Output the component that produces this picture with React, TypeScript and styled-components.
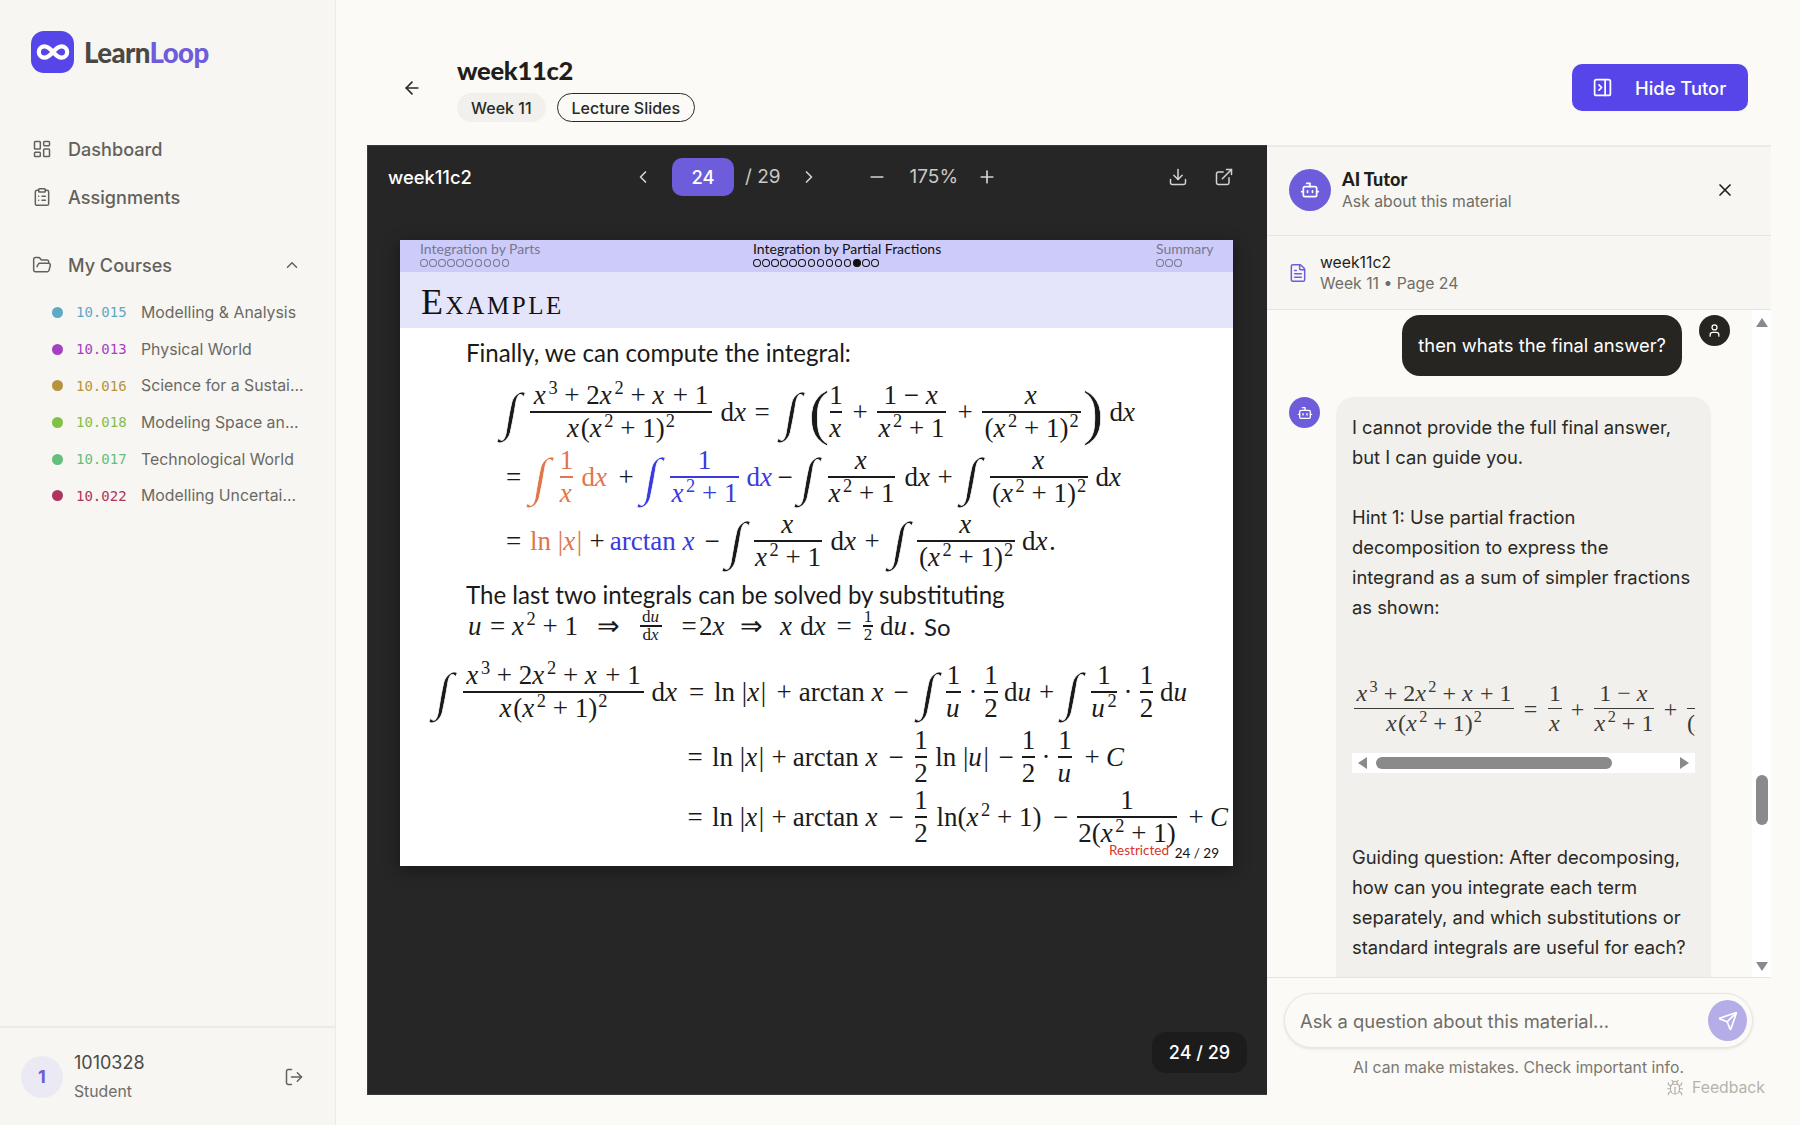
import React from "react";
import styled, { createGlobalStyle } from "styled-components";
import {
  ArrowLeft,
  Bot,
  Bug,
  ChevronLeft,
  ChevronRight,
  ChevronUp,
  ClipboardList,
  Download,
  ExternalLink,
  FileText,
  FolderOpen,
  Infinity as InfinityIcon,
  LayoutDashboard,
  LogOut,
  Minus,
  PanelRightClose,
  Plus,
  Send,
  User,
  X,
} from "lucide-react";

const GlobalStyle = createGlobalStyle`
  html, body { margin: 0; padding: 0; background: #fbfaf6; }
  * { box-sizing: border-box; }
  body { font-family: Inter, "Liberation Sans", sans-serif; color: #2a2925; }
`;

const Page = styled.div`
  display: flex;
  width: 1800px;
  height: 1125px;
  overflow: hidden;
  position: relative;
  background: #fbfaf6;
`;

/* sidebar */
const Sidebar = styled.aside`
  width: 336px;
  flex: none;
  display: flex;
  flex-direction: column;
  background: #f7f6f2;
  border-right: 1px solid #eceae5;
  padding-top: 31px;
`;

const Logo = styled.div`
  display: flex;
  align-items: center;
  gap: 10px;
  margin-left: 31px;
  height: 42px;
`;

const LogoMark = styled.div`
  width: 43px;
  height: 42px;
  border-radius: 13px;
  background: #5645e8;
  color: #fff;
  display: flex;
  align-items: center;
  justify-content: center;
`;

const LogoText = styled.div`
  font-family: Lato, sans-serif;
  font-weight: 900;
  font-size: 27.6px;
  letter-spacing: -0.6px;
  color: #4a4843;
  span { color: #6d5ddb; }
`;

const Nav = styled.nav`
  margin-top: 52px;
  display: flex;
  flex-direction: column;
`;

const NavItem = styled.div<{ $mt?: number }>`
  height: 48px;
  margin-top: ${(p) => p.$mt ?? 0}px;
  padding: 0 34px 0 32px;
  display: flex;
  align-items: center;
  gap: 16px;
  font-size: 18.1px;
  font-weight: 450;
  color: #63615b;
  svg { flex: none; }
`;

const NavEnd = styled.span`
  margin-left: auto;
  display: flex;
`;

const CourseList = styled.div`
  margin-top: 5px;
  display: flex;
  flex-direction: column;
`;

const Course = styled.div`
  height: 36.7px;
  display: flex;
  align-items: center;
  padding-left: 52px;
  white-space: nowrap;
`;

const Dot = styled.span<{ $c: string }>`
  width: 11px;
  height: 11px;
  border-radius: 50%;
  background: ${(p) => p.$c};
  flex: none;
`;

const Code = styled.span<{ $c: string }>`
  font-family: "DejaVu Sans Mono", monospace;
  font-size: 14px;
  color: ${(p) => p.$c};
  margin-left: 13px;
  width: 65px;
  flex: none;
`;

const CourseName = styled.span`
  font-size: 15.85px;
  color: #6b6963;
`;

const UserBox = styled.div`
  margin-top: auto;
  height: 99px;
  border-top: 2px solid #eceae5;
  display: flex;
  align-items: center;
  padding: 0 31px 0 21px;
  gap: 11px;
`;

const Avatar = styled.div`
  width: 42px;
  height: 42px;
  border-radius: 50%;
  background: #ebe9f4;
  color: #6d5ddb;
  font-weight: 700;
  font-size: 18px;
  display: flex;
  align-items: center;
  justify-content: center;
`;

const UserText = styled.div`
  display: flex;
  flex-direction: column;
  gap: 8px;
`;

const UserName = styled.div`
  font-size: 18px;
  line-height: 23px;
  color: #4c4a45;
`;

const UserRole = styled.div`
  font-size: 15.75px;
  line-height: 20px;
  color: #6f6d68;
`;

const LogoutButton = styled.div`
  margin-left: auto;
  display: flex;
  color: #63615b;
`;

/* main */
const Main = styled.main`
  flex: 1;
  min-width: 0;
  display: flex;
  flex-direction: column;
`;

const Header = styled.header`
  height: 145px;
  flex: none;
  padding: 30px 52px 0 66px;
  display: flex;
  align-items: center;
`;

const BackButton = styled.div`
  display: flex;
  color: #2a2925;
  margin-right: 35px;
`;

const TitleBlock = styled.div`
  display: flex;
  flex-direction: column;
  gap: 5px;
`;

const Title = styled.h1`
  margin: 0;
  font-family: Lato, sans-serif;
  font-size: 25.5px;
  line-height: 35px;
  font-weight: 900;
  color: #1f1e1b;
  letter-spacing: -0.3px;
`;

const Chips = styled.div`
  display: flex;
  gap: 11px;
`;

const Chip = styled.span<{ $outline?: boolean }>`
  height: 29px;
  padding: 0 14px;
  border-radius: 15px;
  display: flex;
  align-items: center;
  font-size: 16px;
  font-weight: 500;
  color: #2a2925;
  background: ${(p) => (p.$outline ? "#fbfaf6" : "#f1f0ec")};
  border: ${(p) => (p.$outline ? "1.5px solid #2a2925" : "0")};
`;

const HideButton = styled.div`
  margin-left: auto;
  width: 176px;
  height: 47px;
  border-radius: 10px;
  background: #5645e8;
  color: #fff;
  display: flex;
  align-items: center;
  padding-left: 20px;
  gap: 22px;
  font-size: 18.37px;
  font-weight: 500;
`;

const Workspace = styled.div`
  flex: 1;
  min-height: 0;
  display: flex;
  margin: 0 29px 30px 31px;
`;

/* viewer */
const Viewer = styled.section`
  width: 900px;
  flex: none;
  background: #262626;
  border: 1px solid #3a3a38;
  border-right: 0;
  position: relative;
  display: flex;
  flex-direction: column;
`;

const ViewerBar = styled.div`
  height: 61px;
  flex: none;
  display: flex;
  align-items: center;
  padding-left: 20px;
  color: #fff;
`;

const ViewerTitle = styled.div`
  width: 235px;
  font-size: 18.37px;
  font-weight: 500;
`;

const BarIcon = styled.span<{ $ml?: number }>`
  display: flex;
  margin-left: ${(p) => p.$ml ?? 0}px;
  color: #d4d3cf;
`;

const PageInput = styled.div`
  width: 62px;
  height: 38px;
  margin-left: 19px;
  border-radius: 10px;
  background: #6d5ddb;
  color: #fff;
  display: flex;
  align-items: center;
  justify-content: center;
  font-size: 18.37px;
  font-weight: 500;
`;

const BarText = styled.span<{ $ml: number }>`
  margin-left: ${(p) => p.$ml}px;
  font-size: 19px;
  color: #c9c8c4;
`;

const Slide = styled.div`
  width: 833px;
  height: 626px;
  margin: 33px 0 0 32px;
  background: #fff;
  position: relative;
  overflow: hidden;
  box-shadow: 0 4px 16px rgba(0, 0, 0, 0.4);
  display: flex;
  flex-direction: column;
  font-family: "Liberation Serif", serif;
  color: #1a1a1a;
`;

const SlideNav = styled.div`
  height: 32px;
  flex: none;
  background: #cccbf9;
  display: flex;
  padding: 1px 0 0 20px;
  font-family: Lato, sans-serif;
  font-size: 14px;
  line-height: 16px;
`;

const NavGroup = styled.div<{ $w?: number; $muted?: boolean }>`
  width: ${(p) => (p.$w ? `${p.$w}px` : "auto")};
  color: ${(p) => (p.$muted ? "#77778f" : "#111")};
`;

const NavDots = styled.div`
  display: flex;
  gap: 1.6px;
  margin-top: 2px;
`;

const NavDot = styled.span<{ $on?: boolean }>`
  width: 7.5px;
  height: 8px;
  border-radius: 50%;
  border: 1px solid currentColor;
  background: ${(p) => (p.$on ? "currentColor" : "transparent")};
`;

const SlideTitle = styled.div`
  height: 56px;
  flex: none;
  background: #e4e4fa;
  display: flex;
  align-items: center;
  padding: 4px 0 0 21px;
  font-size: 36px;
  font-variant: small-caps;
  letter-spacing: 2.6px;
  color: #111;
`;

const SansLine = styled.div<{ $mt: number }>`
  margin: ${(p) => p.$mt}px 0 0 66px;
  font-family: Lato, sans-serif;
  font-size: 24.1px;
  line-height: 26px;
  height: 26px;
  white-space: nowrap;
`;

const MathRow = styled.div<{ $mt?: number; $h?: number; $pl: number }>`
  margin-top: ${(p) => p.$mt ?? 0}px;
  height: ${(p) => p.$h ?? 64}px;
  padding-left: ${(p) => p.$pl}px;
  display: flex;
  align-items: center;
  flex: none;
  font-size: 27px;
  white-space: nowrap;
`;

const T = styled.span<{ $ml?: number; $w?: number; $c?: string }>`
  display: inline-block;
  flex: none;
  margin-left: ${(p) => p.$ml ?? 0}px;
  width: ${(p) => (p.$w ? `${p.$w}px` : "auto")};
  text-align: center;
  color: ${(p) => p.$c ?? "inherit"};
`;

const I = styled.i`
  font-style: italic;
  letter-spacing: 0.06em;
`;

const Sup = styled.sup`
  font-size: 0.68em;
  line-height: 0;
  margin-left: 1px;
`;

// tall symbols: the white stroke thins the glyph to the weight of the slide's font
const Big = styled.span<{ $ml?: number; $w: number; $c?: string; $size?: number; $skew?: number }>`
  display: flex;
  justify-content: center;
  flex: none;
  width: ${(p) => p.$w}px;
  margin-left: ${(p) => p.$ml ?? 0}px;
  color: ${(p) => p.$c ?? "inherit"};
  font-size: ${(p) => p.$size ?? 52}px;
  line-height: 1;
  font-weight: 400;
  font-family: "Liberation Serif", serif;
  -webkit-text-stroke: 0.7px #fff;
  transform: skewX(${(p) => p.$skew ?? -10}deg);
`;

const FracBox = styled.span<{ $ml?: number; $w?: number; $c?: string; $lh?: number; $fs?: number }>`
  display: inline-flex;
  flex-direction: column;
  align-items: center;
  flex: none;
  margin-left: ${(p) => p.$ml ?? 0}px;
  width: ${(p) => (p.$w ? `${p.$w}px` : "auto")};
  color: ${(p) => p.$c ?? "inherit"};
  line-height: ${(p) => p.$lh ?? 31}px;
  font-size: ${(p) => (p.$fs ? `${p.$fs}px` : "inherit")};
`;

const FracBar = styled.span`
  display: block;
  align-self: stretch;
  height: 1.5px;
  background: currentColor;
`;

const FracPart = styled.span`
  display: block;
  white-space: nowrap;
`;

const Footnote = styled.span<{ $c: string; $right: number; $bottom: number }>`
  position: absolute;
  bottom: ${(p) => p.$bottom}px;
  right: ${(p) => p.$right}px;
  font-family: Lato, sans-serif;
  font-size: 13.5px;
  color: ${(p) => p.$c};
`;

const SansInline = styled.span`
  font-family: Lato, sans-serif;
  font-size: 24px;
  margin-left: 9px;
`;

const PageBadge = styled.div`
  position: absolute;
  right: 20px;
  bottom: 21px;
  width: 95px;
  height: 41px;
  border-radius: 14px;
  background: #1c1c1c;
  color: #fff;
  display: flex;
  align-items: center;
  justify-content: center;
  font-size: 18px;
  font-weight: 500;
`;

/* tutor */
const Tutor = styled.section`
  flex: 1;
  min-width: 0;
  border-top: 2px solid #eceae5;
  display: flex;
  flex-direction: column;
`;

const TutorHead = styled.div`
  height: 89px;
  flex: none;
  background: #f7f6f2;
  border-bottom: 1px solid #e6e4df;
  display: flex;
  align-items: center;
  padding: 0 36px 2px 22px;
  gap: 11px;
`;

const RoundIcon = styled.div<{ $size: number; $bg: string }>`
  width: ${(p) => p.$size}px;
  height: ${(p) => p.$size}px;
  border-radius: 50%;
  background: ${(p) => p.$bg};
  color: #fff;
  flex: none;
  display: flex;
  align-items: center;
  justify-content: center;
`;

const HeadTitle = styled.div`
  font-family: Lato, sans-serif;
  font-size: 18px;
  font-weight: 900;
  line-height: 23px;
  color: #1f1e1b;
`;

const Muted = styled.div`
  font-size: 15.75px;
  line-height: 21px;
  color: #6f6d68;
`;

const CloseButton = styled.div`
  margin-left: auto;
  display: flex;
  color: #1f1e1b;
`;

const DocRow = styled.div`
  height: 74px;
  flex: none;
  background: #f7f6f2;
  border-bottom: 1px solid #e6e4df;
  display: flex;
  align-items: center;
  padding-left: 21px;
  gap: 12px;
  color: #6d5ddb;
`;

const DocName = styled.div`
  font-size: 15.75px;
  line-height: 21px;
  color: #1f1e1b;
`;

const ChatWrap = styled.div`
  flex: 1;
  min-height: 0;
  display: flex;
  background: #fbfaf6;
`;

const Messages = styled.div`
  flex: 1;
  min-width: 0;
  overflow: hidden;
  padding: 5px 22px 0;
  display: flex;
  flex-direction: column;
`;

const UserRow = styled.div`
  display: flex;
  justify-content: flex-end;
  gap: 17px;
  flex: none;
`;

const UserBubble = styled.div`
  height: 61px;
  padding: 0 16px 1px;
  border-radius: 18px;
  background: #262522;
  color: #fff;
  display: flex;
  align-items: center;
  font-size: 18.37px;
`;

const BotRow = styled.div`
  display: flex;
  gap: 16px;
  margin-top: 21px;
  flex: none;
`;

const BotBubble = styled.div`
  width: 375px;
  flex: none;
  border-radius: 18px;
  background: #f1f0ec;
  padding: 15px 16px 30px;
  font-size: 18.37px;
  line-height: 30px;
  color: #2a2925;
`;

const Para = styled.p<{ $mt?: number }>`
  margin: ${(p) => p.$mt ?? 0}px 0 0;
  white-space: nowrap;
`;

const MathScroll = styled.div`
  margin-top: 56px;
  width: 343px;
  overflow: hidden;
`;

const ChatMath = styled.div`
  display: flex;
  align-items: center;
  height: 61px;
  padding-left: 2px;
  font-family: "Liberation Serif", serif;
  font-size: 24px;
  color: #3b3a36;
  white-space: nowrap;
`;

const HScroll = styled.div`
  margin-top: 14px;
  height: 20px;
  background: #fff;
  display: flex;
  align-items: center;
  padding: 0 6px;
`;

const Arrow = styled.span<{ $dir: "up" | "down" | "left" | "right" }>`
  width: 0;
  height: 0;
  flex: none;
  border-style: solid;
  border-color: transparent;
  ${(p) =>
    p.$dir === "up"
      ? "border-width: 0 6px 9px; border-bottom-color: #8a8a8a;"
      : p.$dir === "down"
      ? "border-width: 9px 6px 0; border-top-color: #8a8a8a;"
      : p.$dir === "left"
      ? "border-width: 6px 9px 6px 0; border-right-color: #8a8a8a;"
      : "border-width: 6px 0 6px 9px; border-left-color: #8a8a8a;"}
`;

const HThumb = styled.span`
  width: 236px;
  height: 12px;
  margin-left: 9px;
  margin-right: auto;
  border-radius: 6px;
  background: #8a8a8a;
`;

const VScroll = styled.div`
  width: 19px;
  flex: none;
  background: #fff;
  display: flex;
  flex-direction: column;
  align-items: center;
  padding: 8px 0 6px;
`;

const VThumb = styled.span`
  width: 12px;
  height: 50px;
  margin-top: 448px;
  margin-bottom: auto;
  border-radius: 6px;
  background: #8a8a8a;
`;

const Composer = styled.div`
  height: 118px;
  flex: none;
  border-top: 1px solid #e6e4df;
  padding: 15px 18px 0 17px;
`;

const InputPill = styled.div`
  height: 55px;
  border-radius: 28px;
  border: 1px solid #e8e6e1;
  background: #fbfaf6;
  box-shadow: 0 1px 3px rgba(0, 0, 0, 0.1);
  display: flex;
  align-items: center;
  padding: 0 5px 0 15px;
  font-size: 18.37px;
  color: #6f6d68;
`;

const SendButton = styled.div`
  margin-left: auto;
  width: 39px;
  height: 41px;
  border-radius: 50%;
  background: #b5ade8;
  color: #fff;
  display: flex;
  align-items: center;
  justify-content: center;
`;

const Note = styled.div`
  margin-top: 10px;
  text-align: center;
  font-size: 15.75px;
  line-height: 20px;
  color: #7a7873;
`;

const Feedback = styled.div`
  position: absolute;
  right: 35px;
  bottom: 28px;
  display: flex;
  align-items: center;
  gap: 8px;
  font-size: 15.75px;
  color: #b5b3ae;
`;

const courses = [
  { code: "10.015", name: "Modelling & Analysis", color: "#5ea9c4" },
  { code: "10.013", name: "Physical World", color: "#a63fc4" },
  { code: "10.016", name: "Science for a Sustai...", color: "#b8933c" },
  { code: "10.018", name: "Modeling Space an...", color: "#82c04a" },
  { code: "10.017", name: "Technological World", color: "#62bf7c" },
  { code: "10.022", name: "Modelling Uncertai...", color: "#b0345f" },
];

const ORANGE = "#e0764a";
const BLUE = "#3a3ae0";

const x = <I>x</I>;
const x2p1 = (
  <>
    {x}
    <Sup>2</Sup> + 1
  </>
);
const x2p12 = (
  <>
    ({x}
    <Sup>2</Sup> + 1)<Sup>2</Sup>
  </>
);
const bigNum = (
  <>
    {x}
    <Sup>3</Sup> + 2{x}
    <Sup>2</Sup> + {x} + 1
  </>
);
const bigDen = (
  <>
    {x}({x}
    <Sup>2</Sup> + 1)<Sup>2</Sup>
  </>
);

interface FracProps {
  n: React.ReactNode;
  d: React.ReactNode;
  ml?: number;
  w?: number;
  c?: string;
  lh?: number;
  fs?: number;
}

const Frac = ({ n, d, ml, w, c, lh, fs }: FracProps) => (
  <FracBox $ml={ml} $w={w} $c={c} $lh={lh} $fs={fs}>
    <FracPart>{n}</FracPart>
    <FracBar />
    <FracPart>{d}</FracPart>
  </FracBox>
);

const Integral = ({ ml, c }: { ml: number; c?: string }) => (
  <Big $ml={ml} $w={20} $c={c}>
    ∫
  </Big>
);

const Dx = ({ ml, c, v = "x" }: { ml: number; c?: string; v?: string }) => (
  <T $ml={ml} $w={28} $c={c}>
    d<I>{v}</I>
  </T>
);

// "= ln|x| + arctan x −", shared by the last three lines
const LnArctan = () => (
  <>
    <T $w={20}>=</T>
    <T $ml={7} $w={50}>
      ln |{x}|
    </T>
    <T $ml={7} $w={20}>
      +
    </T>
    <T $ml={3} $w={88}>
      arctan {x}
    </T>
    <T $ml={7} $w={18}>
      −
    </T>
  </>
);

const Dots = ({ count, active }: { count: number; active?: number }) => (
  <NavDots>
    {Array.from({ length: count }, (_, i) => (
      <NavDot key={i} $on={i === active} />
    ))}
  </NavDots>
);

const SlideContent = () => (
  <Slide>
    <SlideNav>
      <NavGroup $w={333} $muted>
        Integration by Parts
        <Dots count={10} />
      </NavGroup>
      <NavGroup $w={403}>
        Integration by Partial Fractions
        <Dots count={14} active={11} />
      </NavGroup>
      <NavGroup $muted>
        Summary
        <Dots count={3} />
      </NavGroup>
    </SlideNav>
    <SlideTitle>Example</SlideTitle>

    <SansLine $mt={12}>Finally, we can compute the integral:</SansLine>

    <MathRow $mt={14} $pl={102}>
      <Integral ml={0} />
      <Frac ml={8} w={182} n={bigNum} d={bigDen} />
      <Dx ml={8} />
      <T $ml={4} $w={20}>=</T>
      <Integral ml={10} />
      <Big $ml={10} $w={14} $size={62} $skew={0}>(</Big>
      <Frac ml={4} w={12} n="1" d={x} />
      <T $ml={8} $w={20}>+</T>
      <Frac ml={7} w={69} n={<>1 − {x}</>} d={x2p1} />
      <T $ml={9} $w={20}>+</T>
      <Frac ml={7} w={99} n={x} d={x2p12} />
      <Big $ml={5} $w={14} $size={62} $skew={0}>)</Big>
      <Dx ml={9} />
    </MathRow>

    <MathRow $mt={1} $pl={105}>
      <T $w={17}>=</T>
      <Integral ml={9} c={ORANGE} />
      <Frac ml={9} w={13} n="1" d={x} c={ORANGE} />
      <Dx ml={8} c={ORANGE} />
      <T $ml={7} $w={20}>+</T>
      <Integral ml={6} c={BLUE} />
      <Frac ml={8} w={69} n="1" d={x2p1} c={BLUE} />
      <Dx ml={7} c={BLUE} />
      <T $ml={2} $w={18}>−</T>
      <Integral ml={5} />
      <Frac ml={9} w={67} n={x} d={x2p1} />
      <Dx ml={9} />
      <T $ml={3} $w={20}>+</T>
      <Integral ml={7} />
      <Frac ml={8} w={98} n={x} d={x2p12} />
      <Dx ml={7} />
    </MathRow>

    <MathRow $pl={105}>
      <T $w={17}>=</T>
      <T $ml={8} $w={52} $c={ORANGE}>
        ln |{x}|
      </T>
      <T $ml={5} $w={20}>+</T>
      <T $ml={2} $w={88} $c={BLUE}>
        arctan {x}
      </T>
      <T $ml={6} $w={18}>−</T>
      <Integral ml={6} />
      <Frac ml={7} w={68} n={x} d={x2p1} />
      <Dx ml={8} />
      <T $ml={4} $w={20}>+</T>
      <Integral ml={8} />
      <Frac ml={7} w={98} n={x} d={x2p12} />
      <T $ml={7}>d{x}.</T>
    </MathRow>

    <SansLine $mt={9}>The last two integrals can be solved by substituting</SansLine>

    <MathRow $mt={1} $h={34} $pl={66}>
      <T $w={114}>
        <I>u</I> = {x}
        <Sup>2</Sup> + 1
      </T>
      <T $ml={17} $w={23}>⇒</T>
      <Frac ml={20} w={22} fs={17} lh={16} n={<>d<I>u</I></>} d={<>d{x}</>} />
      <T $ml={18} $w={18}>=</T>
      <T $ml={1} $w={25}>2{x}</T>
      <T $ml={16} $w={23}>⇒</T>
      <T $ml={17} $w={47}>{x} d{x}</T>
      <T $ml={8} $w={18}>=</T>
      <Frac ml={10} w={10} fs={17} lh={16} n="1" d="2" />
      <T $ml={7} $w={35}>d<I>u</I>.</T>
      <SansInline>So</SansInline>
    </MathRow>

    <MathRow $mt={17} $pl={34}>
      <Integral ml={0} />
      <Frac ml={9} w={181} n={bigNum} d={bigDen} />
      <Dx ml={7} />
      <T $ml={8} $w={19}>=</T>
      <T $ml={8} $w={50}>ln |{x}|</T>
      <T $ml={10} $w={20}>+</T>
      <T $ml={4} $w={88}>arctan {x}</T>
      <T $ml={7} $w={16}>−</T>
      <Integral ml={10} />
      <Frac ml={7} w={15} n="1" d={<I>u</I>} />
      <T $ml={5} $w={14}>·</T>
      <Frac ml={4} w={14} n="1" d="2" />
      <Dx ml={6} v="u" />
      <T $ml={5} $w={19}>+</T>
      <Integral ml={7} />
      <Frac ml={8} w={26} n="1" d={<><I>u</I><Sup>2</Sup></>} />
      <T $ml={4} $w={14}>·</T>
      <Frac ml={5} w={13} n="1" d="2" />
      <Dx ml={7} v="u" />
    </MathRow>

    <MathRow $mt={1} $pl={285}>
      <LnArctan />
      <Frac ml={10} w={12} n="1" d="2" />
      <T $ml={8} $w={54}>ln |<I>u</I>|</T>
      <T $ml={8} $w={18}>−</T>
      <Frac ml={7} w={13} n="1" d="2" />
      <T $ml={4} $w={14}>·</T>
      <Frac ml={5} w={14} n="1" d={<I>u</I>} />
      <T $ml={10} $w={20}>+</T>
      <T $ml={4}><I>C</I></T>
    </MathRow>

    <MathRow $h={56} $pl={285}>
      <LnArctan />
      <Frac ml={10} w={12} n="1" d="2" />
      <T $ml={8} $w={108}>ln({x}<Sup>2</Sup> + 1)</T>
      <T $ml={9} $w={17}>−</T>
      <Frac ml={8} w={100} n="1" d={<>2({x}<Sup>2</Sup> + 1)</>} />
      <T $ml={10} $w={18}>+</T>
      <T $ml={5}><I>C</I></T>
    </MathRow>

    <Footnote $c="#d8352a" $right={64} $bottom={8}>Restricted</Footnote>
    <Footnote $c="#111" $right={14} $bottom={5}>24 / 29</Footnote>
  </Slide>
);

export default function App() {
  return (
    <Page>
      <GlobalStyle />
      <Sidebar>
        <Logo>
          <LogoMark>
            <InfinityIcon size={34} strokeWidth={3} />
          </LogoMark>
          <LogoText>
            Learn<span>Loop</span>
          </LogoText>
        </Logo>
        <Nav>
          <NavItem>
            <LayoutDashboard size={20} strokeWidth={1.8} /> Dashboard
          </NavItem>
          <NavItem>
            <ClipboardList size={20} strokeWidth={1.8} /> Assignments
          </NavItem>
          <NavItem $mt={20}>
            <FolderOpen size={20} strokeWidth={1.8} /> My Courses
            <NavEnd>
              <ChevronUp size={18} />
            </NavEnd>
          </NavItem>
        </Nav>
        <CourseList>
          {courses.map((c) => (
            <Course key={c.code}>
              <Dot $c={c.color} />
              <Code $c={c.color}>{c.code}</Code>
              <CourseName>{c.name}</CourseName>
            </Course>
          ))}
        </CourseList>
        <UserBox>
          <Avatar>1</Avatar>
          <UserText>
            <UserName>1010328</UserName>
            <UserRole>Student</UserRole>
          </UserText>
          <LogoutButton>
            <LogOut size={20} strokeWidth={1.8} />
          </LogoutButton>
        </UserBox>
      </Sidebar>

      <Main>
        <Header>
          <BackButton>
            <ArrowLeft size={20} strokeWidth={2} />
          </BackButton>
          <TitleBlock>
            <Title>week11c2</Title>
            <Chips>
              <Chip>Week 11</Chip>
              <Chip $outline>Lecture Slides</Chip>
            </Chips>
          </TitleBlock>
          <HideButton>
            <PanelRightClose size={21} strokeWidth={2} /> Hide Tutor
          </HideButton>
        </Header>

        <Workspace>
          <Viewer>
            <ViewerBar>
              <ViewerTitle>week11c2</ViewerTitle>
              <BarIcon $ml={10}>
                <ChevronLeft size={20} strokeWidth={2} />
              </BarIcon>
              <PageInput>24</PageInput>
              <BarText $ml={11}>/ 29</BarText>
              <BarIcon $ml={18}>
                <ChevronRight size={20} strokeWidth={2} />
              </BarIcon>
              <BarIcon $ml={48}>
                <Minus size={20} strokeWidth={2} />
              </BarIcon>
              <BarText $ml={23}>175%</BarText>
              <BarIcon $ml={19}>
                <Plus size={20} strokeWidth={2} />
              </BarIcon>
              <BarIcon $ml={171}>
                <Download size={20} strokeWidth={1.8} />
              </BarIcon>
              <BarIcon $ml={26}>
                <ExternalLink size={20} strokeWidth={1.8} />
              </BarIcon>
            </ViewerBar>
            <SlideContent />
            <PageBadge>24 / 29</PageBadge>
          </Viewer>

          <Tutor>
            <TutorHead>
              <RoundIcon $size={42} $bg="#6d5ddb">
                <Bot size={20} strokeWidth={2} />
              </RoundIcon>
              <div>
                <HeadTitle>AI Tutor</HeadTitle>
                <Muted>Ask about this material</Muted>
              </div>
              <CloseButton>
                <X size={20} strokeWidth={2} />
              </CloseButton>
            </TutorHead>
            <DocRow>
              <FileText size={20} strokeWidth={1.8} />
              <div>
                <DocName>week11c2</DocName>
                <Muted>Week 11 • Page 24</Muted>
              </div>
            </DocRow>
            <ChatWrap>
              <Messages>
                <UserRow>
                  <UserBubble>then whats the final answer?</UserBubble>
                  <RoundIcon $size={31} $bg="#262522">
                    <User size={15} strokeWidth={2} />
                  </RoundIcon>
                </UserRow>
                <BotRow>
                  <RoundIcon $size={31} $bg="#6d5ddb">
                    <Bot size={16} strokeWidth={2} />
                  </RoundIcon>
                  <BotBubble>
                    <Para>
                      I cannot provide the full final answer,
                      <br />
                      but I can guide you.
                    </Para>
                    <Para $mt={30}>
                      Hint 1: Use partial fraction
                      <br />
                      decomposition to express the
                      <br />
                      integrand as a sum of simpler fractions
                      <br />
                      as shown:
                    </Para>
                    <MathScroll>
                      <ChatMath>
                        <Frac w={160} lh={29} n={bigNum} d={bigDen} />
                        <T $ml={9} $w={15}>=</T>
                        <Frac ml={10} w={14} lh={29} n="1" d={x} />
                        <T $ml={8} $w={15}>+</T>
                        <Frac ml={9} w={60} lh={29} n={<>1 − {x}</>} d={x2p1} />
                        <T $ml={9} $w={15}>+</T>
                        <Frac ml={9} w={84} lh={29} n={x} d={x2p12} />
                      </ChatMath>
                      <HScroll>
                        <Arrow $dir="left" />
                        <HThumb />
                        <Arrow $dir="right" />
                      </HScroll>
                    </MathScroll>
                    <Para $mt={69}>
                      Guiding question: After decomposing,
                      <br />
                      how can you integrate each term
                      <br />
                      separately, and which substitutions or
                      <br />
                      standard integrals are useful for each?
                    </Para>
                  </BotBubble>
                </BotRow>
              </Messages>
              <VScroll>
                <Arrow $dir="up" />
                <VThumb />
                <Arrow $dir="down" />
              </VScroll>
            </ChatWrap>
            <Composer>
              <InputPill>
                Ask a question about this material...
                <SendButton>
                  <Send size={20} strokeWidth={2} />
                </SendButton>
              </InputPill>
              <Note>AI can make mistakes. Check important info.</Note>
            </Composer>
          </Tutor>
        </Workspace>
      </Main>
      <Feedback>
        <Bug size={18} strokeWidth={1.6} /> Feedback
      </Feedback>
    </Page>
  );
}
